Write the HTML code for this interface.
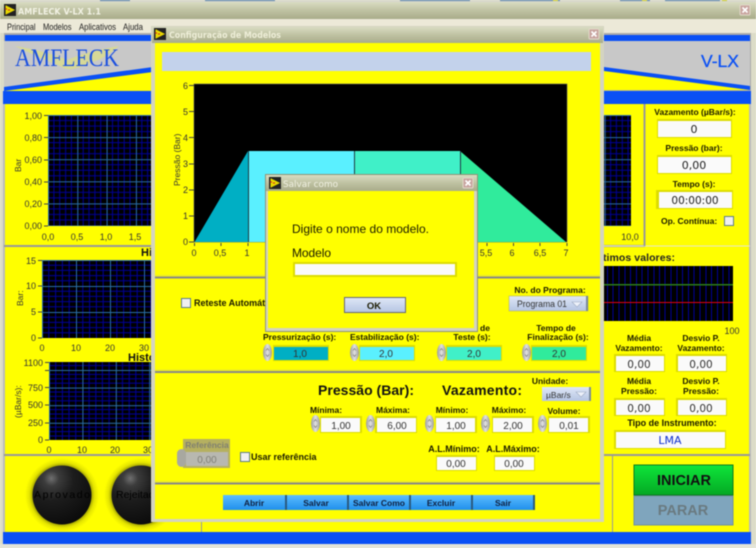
<!DOCTYPE html>
<html><head><meta charset="utf-8"><title>AMFLECK V-LX 1.1</title>
<style>
html,body{margin:0;padding:0;width:756px;height:548px;overflow:hidden;background:#ece9d8}
svg{display:block;filter:blur(.4px)}
text{font-family:"Liberation Sans",sans-serif;fill:#111}
.b{font-weight:bold;font-size:8.5px;fill:#1a1a00}
.c{text-anchor:middle}
.v{font-family:"DejaVu Sans",sans-serif;font-size:9.5px;fill:#333;text-anchor:middle}
.t{font-size:9px;fill:#333;text-anchor:middle}
.r{font-size:9px;fill:#333;text-anchor:end}
.w{font-family:"DejaVu Sans",sans-serif;font-weight:bold;font-size:9px;fill:#f2f2e4}
.m{font-size:9px;fill:#222}
</style></head><body>
<svg width="756" height="548" viewBox="0 0 756 548" xmlns="http://www.w3.org/2000/svg">
<defs>
<linearGradient id="tb" x1="0" y1="0" x2="0" y2="1"><stop offset="0" stop-color="#d9dcc2"/><stop offset=".5" stop-color="#bfc2a2"/><stop offset="1" stop-color="#a9ac8a"/></linearGradient>
<linearGradient id="bb" x1="0" y1="0" x2="0" y2="1"><stop offset="0" stop-color="#5cbcff"/><stop offset="1" stop-color="#1f8fec"/></linearGradient>
<linearGradient id="dd" x1="0" y1="0" x2="0" y2="1"><stop offset="0" stop-color="#dfe7f7"/><stop offset="1" stop-color="#b5c5e2"/></linearGradient>
<linearGradient id="sp" x1="0" y1="0" x2="1" y2="0"><stop offset="0" stop-color="#9a9a9a"/><stop offset=".5" stop-color="#e2e2e2"/><stop offset="1" stop-color="#9a9a9a"/></linearGradient>
<linearGradient id="gr" x1="0" y1="0" x2="0" y2="1"><stop offset="0" stop-color="#0ee63a"/><stop offset="1" stop-color="#04a824"/></linearGradient>
<radialGradient id="ball" cx=".32" cy=".22" r=".85"><stop offset="0" stop-color="#707070"/><stop offset=".15" stop-color="#3c3c3c"/><stop offset=".45" stop-color="#1c1c1c"/><stop offset="1" stop-color="#0a0a0a"/></radialGradient>
<radialGradient id="glow" cx=".5" cy=".5" r=".5"><stop offset=".78" stop-color="#9a9a00"/><stop offset=".88" stop-color="#e4e400"/><stop offset="1" stop-color="#ffff00"/></radialGradient>
<pattern id="g1" x="48" y="115" width="29.3" height="22.1" patternUnits="userSpaceOnUse"><rect width="29.3" height="22.1" fill="#000"/><path d="M5.9 0V22.1M11.7 0V22.1M17.6 0V22.1M23.4 0V22.1M0 5.5H29.3M0 11H29.3M0 16.6H29.3" stroke="#00009a" stroke-width="1"/><path d="M.5 0V22.1M0 .5H29.3" stroke="#2a6ea8" stroke-width="1"/></pattern>
<pattern id="g2" x="42" y="260" width="34" height="26" patternUnits="userSpaceOnUse"><rect width="34" height="26" fill="#000"/><path d="M6.8 0V26M13.6 0V26M20.4 0V26M27.2 0V26M0 5.2H34M0 10.4H34M0 15.6H34M0 20.8H34" stroke="#00009a" stroke-width="1"/><path d="M.5 0V26M0 .5H34" stroke="#2a6ea8" stroke-width="1"/></pattern>
<pattern id="g3" x="49" y="370" width="33.4" height="17.6" patternUnits="userSpaceOnUse"><rect width="33.4" height="17.6" fill="#000"/><path d="M6.7 0V17.6M13.4 0V17.6M20 0V17.6M26.7 0V17.6M0 4.4H33.4M0 8.8H33.4M0 13.2H33.4" stroke="#00009a" stroke-width="1"/><path d="M.5 0V17.6M0 .5H33.4" stroke="#2a6ea8" stroke-width="1"/></pattern>
<g id="icon"><rect width="12" height="12" fill="#222"/><path d="M2 2L10 6L2 10Z" fill="#e8d800" stroke="#e8d800"/><path d="M1 5H3M4 6H6" stroke="#d02020"/></g>
<g id="close"><rect width="10" height="10" rx="1" fill="#c9a5a0" stroke="#e0d8c8"/><path d="M2.5 2.5L7.5 7.5M7.5 2.5L2.5 7.5" stroke="#fff" stroke-width="1.6"/></g>
<g id="spin"><ellipse cx="4.5" cy="8.5" rx="4.5" ry="8.5" fill="url(#sp)"/><path d="M3 6.5L4.5 4.5L6 6.5M3 10.5L4.5 12.5L6 10.5" stroke="#888" fill="none" stroke-width=".8"/></g>
</defs>

<!-- top strip + window frame -->
<rect width="756" height="548" fill="#dcdcc8"/>
<rect width="756" height="2" fill="#d8d8cc"/>
<path d="M100 0H130M205 0H275M400 0H470M500 0H560M620 0H650M665 0H720" stroke="#4a78a8" stroke-width="2"/>
<path d="M553 0H558M642 0H647M722 0H727" stroke="#c8c820" stroke-width="2"/>
<rect y="2" width="756" height="17" fill="url(#tb)"/>
<use href="#icon" x="4" y="4"/>
<text x="18" y="14.5" class="w" textLength="83" lengthAdjust="spacingAndGlyphs">AMFLECK V-LX 1.1</text>
<use href="#close" x="740" y="5"/>
<rect y="19" width="756" height="14" fill="#ece9d8"/>
<text x="7" y="30" class="m" textLength="28.500" lengthAdjust="spacingAndGlyphs">Principal</text><text x="43" y="30" class="m" textLength="28.500" lengthAdjust="spacingAndGlyphs">Modelos</text><text x="79" y="30" class="m" textLength="37" lengthAdjust="spacingAndGlyphs">Aplicativos</text><text x="123" y="30" class="m" textLength="20" lengthAdjust="spacingAndGlyphs">Ajuda</text>

<!-- main header -->
<rect x="4" y="33" width="747" height="70" fill="#aaa"/>
<rect x="5" y="35" width="745" height="6" fill="#0a50f5"/>
<rect x="4" y="41" width="746" height="49" fill="#c8c8c8"/>
<path d="M4 91L153 70L378 60L604 69L750 90Z" fill="#ffff00"/>
<path d="M4 87L153 67L153 72L4 91Z" fill="#0a50f5"/>
<path d="M604 67L750 86L750 90L604 71Z" fill="#0a50f5"/>
<rect x="3" y="91" width="748" height="13" fill="#0a50f5"/>
<path d="M15 46Q50 52 67 60Q85 52 119 46Q100 62 90 62Q70 74 60 66Q40 58 15 46Z" fill="#d6d898"/>
<text x="15" y="66" style="font-family:'Liberation Serif',serif;font-size:25px;fill:#1a4fe0" textLength="104" lengthAdjust="spacingAndGlyphs">AMFLECK</text>
<text x="701" y="67" style="font-size:17.500px;fill:#0a50f5;stroke:#0a50f5;stroke-width:.3">V-LX</text>

<!-- main yellow panels -->
<rect x="4" y="104" width="746" height="429" fill="#ffff00"/>
<rect x="3" y="104" width="2" height="430" fill="#bbb"/>
<rect x="749" y="104" width="2" height="430" fill="#bbb"/>
<path d="M4 246H645" stroke="#999" stroke-width="2"/>
<path d="M604 246H750" stroke="#e8e8d0" stroke-width="1"/>
<path d="M644.5 104V246" stroke="#999" stroke-width="2"/>
<path d="M4 455H150M604 455H750" stroke="#999" stroke-width="2"/>
<path d="M612.5 455V532" stroke="#999"/>
<path d="M201.5 520V532" stroke="#999"/>
<rect x="3" y="532" width="748" height="12" fill="#0a50f5"/>
<rect y="544" width="756" height="4" fill="#e4e4d8"/>

<!-- chart 1 -->
<rect x="48" y="115" width="583" height="111" fill="url(#g1)"/>
<path d="M44 115.5H48M44 137.5H48M44 160H48M44 182H48M44 204H48M44 226H48" stroke="#444"/>
<text x="42" y="119" class="r">1,00</text><text x="42" y="141" class="r">0,80</text><text x="42" y="163" class="r">0,60</text><text x="42" y="185" class="r">0,40</text><text x="42" y="207" class="r">0,20</text><text x="42" y="229" class="r">0,00</text>
<text transform="translate(21,172) rotate(-90)" style="font-size:8.5px;fill:#333">Bar</text>
<text x="48" y="240" class="t">0,0</text><text x="77" y="240" class="t">0,5</text><text x="106" y="240" class="t">1,0</text><text x="135" y="240" class="t">1,5</text><text x="630" y="240" class="t">10,0</text>

<!-- chart 2 -->
<text x="141" y="256" style="font-size:11px;font-weight:bold">Hi</text>
<rect x="42" y="260" width="120" height="78" fill="url(#g2)"/>
<path d="M38 260.5H42M38 286H42M38 312H42M38 338H42" stroke="#444"/>
<text x="36" y="264" class="r">15</text><text x="36" y="289" class="r">10</text><text x="36" y="315" class="r">5</text><text x="36" y="341" class="r">0</text>
<text transform="translate(23,306) rotate(-90)" style="font-size:8.5px;fill:#333">Bar:</text>
<text x="42" y="351" class="t">0</text><text x="76" y="351" class="t">10</text><text x="110" y="351" class="t">20</text><text x="144" y="351" class="t">30</text>
<text x="128" y="361" style="font-size:11px;font-weight:bold">Histó</text>

<!-- chart 3 -->
<rect x="49" y="362" width="110" height="78" fill="url(#g3)"/>
<path d="M45 362.5H49M45 370.5H49M45 387.5H49M45 405H49M45 423H49M45 440H49" stroke="#444"/>
<text x="43" y="366" class="r">1100</text><text x="43" y="391" class="r">750</text><text x="43" y="408" class="r">500</text><text x="43" y="426" class="r">250</text><text x="43" y="443" class="r">0</text>
<text transform="translate(21,418) rotate(-90)" style="font-size:8.5px;fill:#333">(µBar/s):</text>
<text x="49" y="453" class="t">0</text><text x="82" y="453" class="t">10</text><text x="115" y="453" class="t">20</text><text x="148" y="453" class="t">30</text>

<!-- balls -->
<circle cx="62" cy="495" r="37" fill="url(#glow)"/><circle cx="62" cy="495" r="29.5" fill="url(#ball)"/>
<circle cx="141" cy="495" r="37" fill="url(#glow)"/><circle cx="141" cy="495" r="29.5" fill="url(#ball)"/>
<text x="62" y="498" class="c" style="font-size:10.5px;fill:#000" textLength="56">Aprovado</text>
<text x="116" y="498" style="font-size:10.5px;fill:#000">Rejeitado</text>

<!-- right info panel -->
<text x="695" y="115" class="b c">Vazamento (µBar/s):</text>
<rect x="657" y="119" width="75" height="19" fill="#dcdc00"/><rect x="658" y="121" width="73" height="16" fill="#fafafa"/>
<text x="694" y="133" class="c" style="font-family:'DejaVu Sans';font-size:11px;fill:#222">0</text>
<text x="694" y="151" class="b c">Pressão (bar):</text>
<rect x="657" y="155" width="75" height="19" fill="#dcdc00"/><rect x="658" y="157" width="73" height="16" fill="#fafafa"/>
<text x="694" y="169" class="c" style="font-family:'DejaVu Sans';font-size:11px;fill:#222">0,00</text>
<text x="694" y="187" class="b c">Tempo (s):</text>
<rect x="656" y="190" width="77" height="19" fill="#dcdc00"/><rect x="659" y="192" width="73" height="16" fill="#fafafa"/>
<text x="695" y="204" class="c" style="font-family:'DejaVu Sans';font-size:10.5px;fill:#222">00:00:00</text>
<text x="661" y="224" class="b">Op. Contínua:</text>
<rect x="724.5" y="216.5" width="9" height="9" fill="#f0f0f0" stroke="#5c7c8c"/>

<text x="603" y="261" style="font-size:10.5px;font-weight:bold;fill:#222" textLength="72">timos valores:</text>
<rect x="604" y="266" width="129" height="55" fill="#000"/>
<path d="M607.5 266V321M613 266V321M619 266V321M625 266V321M630.500 266V321M636.500 266V321M642 266V321M648 266V321M654 266V321M659.500 266V321M665 266V321M671 266V321M677 266V321M682.500 266V321M688.500 266V321M694 266V321M700 266V321M706 266V321M711.500 266V321M717.500 266V321M723 266V321M729 266V321" stroke="#00009a"/>
<rect x="604" y="284" width="129" height="1.500" fill="#2a7a1a"/>
<rect x="604" y="302" width="129" height="1" fill="#e00010"/>
<text x="732" y="334" class="t">100</text>

<text x="639" y="341" class="b c">Média</text><text x="639" y="351" class="b c">Vazamento:</text>
<text x="701" y="341" class="b c">Desvio P.</text><text x="701" y="351" class="b c">Vazamento:</text>
<rect x="614" y="354" width="51" height="18" fill="#dcdc00"/><rect x="616" y="356" width="48" height="15" fill="#fafafa"/><text x="639" y="368" class="v" style="font-size:10.5px">0,00</text>
<rect x="676" y="354" width="51" height="18" fill="#dcdc00"/><rect x="678" y="356" width="48" height="15" fill="#fafafa"/><text x="701" y="368" class="v" style="font-size:10.5px">0,00</text>
<text x="639" y="384" class="b c">Média</text><text x="639" y="394" class="b c">Pressão:</text>
<text x="701" y="384" class="b c">Desvio P.</text><text x="701" y="394" class="b c">Pressão:</text>
<rect x="614" y="398" width="51" height="18" fill="#dcdc00"/><rect x="616" y="400" width="48" height="15" fill="#fafafa"/><text x="639" y="412" class="v" style="font-size:10.5px">0,00</text>
<rect x="676" y="398" width="51" height="18" fill="#dcdc00"/><rect x="678" y="400" width="48" height="15" fill="#fafafa"/><text x="701" y="412" class="v" style="font-size:10.5px">0,00</text>
<text x="672" y="426" class="b c" style="font-size:9px">Tipo de Instrumento:</text>
<rect x="614" y="430" width="112" height="19" fill="#dcdc00"/><rect x="616" y="432" width="109" height="16" fill="#fafafa"/>
<text x="670" y="444" class="c" style="font-family:'DejaVu Sans';font-size:11px;fill:#1030d0">LMA</text>

<!-- start/stop -->
<rect x="634" y="465" width="99" height="30" fill="url(#gr)" stroke="#0a7a20"/>
<text x="684" y="485" class="c" style="font-size:14.5px;font-weight:bold;fill:#111">INICIAR</text>
<rect x="634" y="496" width="99" height="29" fill="#7fa5bd" stroke="#6f8fa0"/>
<text x="683" y="515" class="c" style="font-size:14.5px;font-weight:bold;fill:#6a7a80">PARAR</text>

<!-- config dialog -->
<rect x="151" y="26" width="453" height="496" fill="#d4d4c0"/>
<rect x="152" y="27" width="451" height="16" fill="url(#tb)"/>
<use href="#icon" x="154" y="28"/>
<text x="169" y="38" class="w" style="fill:#eeeed8" textLength="112" lengthAdjust="spacingAndGlyphs">Configuração de Modelos</text>
<use href="#close" x="589" y="29"/>
<rect x="155" y="43" width="445" height="476" fill="#ffff00"/>
<rect x="162" y="52" width="429" height="19" fill="#c3d2eb"/>
<path d="M155 277.500H600M155 372H600M155 483.500H600" stroke="#888" stroke-width="2"/>
<path d="M155 275.500H600M155 370H600M155 481.500H600" stroke="#cfcf60" stroke-width=".6"/>

<rect x="194" y="84" width="373" height="158" fill="#000" stroke="#555" stroke-width=".6"/>
<path d="M194.500 242L248 151V242Z" fill="#00afc4"/>
<rect x="248" y="151" width="106" height="91" fill="#5af0ff"/>
<rect x="354" y="151" width="106" height="91" fill="#40f0c8"/>
<path d="M460 151L566 242H460Z" fill="#30eb9c"/>
<path d="M248.500 151V242M354.500 151V242M460.500 151V242" stroke="#1e3c44"/>
<path d="M189 85.500H194M189 111.500H194M189 137.500H194M189 164H194M189 190H194M189 216H194M189 242H194" stroke="#444"/>
<text x="188" y="89" class="r">6</text><text x="188" y="115" class="r">5</text><text x="188" y="141" class="r">4</text><text x="188" y="167" class="r">3</text><text x="188" y="193" class="r">2</text><text x="188" y="219" class="r">1</text><text x="188" y="245" class="r">0</text>
<text transform="translate(180,186) rotate(-90)" style="font-size:8.5px;fill:#333">Pressão (Bar)</text>
<path d="M194.500 243V246M221 243V246M248 243V246M487 243V246M513.500 243V246M540 243V246M567 243V246" stroke="#444"/>
<text x="194" y="256" class="t">0</text><text x="220" y="256" class="t">0,5</text><text x="247" y="256" class="t">1</text><text x="486" y="256" class="t">5,5</text><text x="512" y="256" class="t">6</text><text x="540" y="256" class="t">6,5</text><text x="566" y="256" class="t">7</text>

<rect x="181.500" y="298.500" width="9" height="9" fill="#f0f0f0" stroke="#5c7c8c"/>
<text x="194" y="306" class="b" style="font-size:9px">Reteste Automático</text>

<text x="550" y="293" class="b c">No. do Programa:</text>
<rect x="509" y="296" width="79" height="15" fill="url(#dd)" stroke="#b8b860" stroke-width=".6"/>
<rect x="586" y="296" width="2" height="15" fill="#7a8a9a"/>
<text x="517" y="307" style="font-size:9px;fill:#333" textLength="50" lengthAdjust="spacingAndGlyphs">Programa 01</text>
<path d="M572 302H582L577 307Z" fill="#eef2fa" stroke="#9aa8c0" stroke-width=".6"/>

<text x="263" y="340" class="b">Pressurização (s):</text>
<text x="350" y="340" class="b">Estabilização (s):</text>
<text x="485" y="331" class="b c">de</text><text x="472" y="340" class="b c">Teste (s):</text>
<text x="556" y="331" class="b c">Tempo de</text><text x="558" y="340" class="b c">Finalização (s):</text>
<use href="#spin" x="263" y="344"/><use href="#spin" x="350" y="344"/><use href="#spin" x="437" y="344"/><use href="#spin" x="522" y="344"/>
<rect x="273" y="345" width="56" height="16" fill="#dcdc00"/><rect x="274" y="347" width="54" height="13" fill="#00afc4"/><text x="300" y="357" class="t" style="font-size:10px">1,0</text>
<rect x="359" y="345" width="56" height="16" fill="#dcdc00"/><rect x="360" y="347" width="54" height="13" fill="#5af0ff"/><text x="386" y="357" class="t" style="font-size:10px">2,0</text>
<rect x="446" y="345" width="56" height="16" fill="#dcdc00"/><rect x="447" y="347" width="54" height="13" fill="#40f0c8"/><text x="474" y="357" class="t" style="font-size:10px">2,0</text>
<rect x="531" y="345" width="56" height="16" fill="#dcdc00"/><rect x="532" y="347" width="54" height="13" fill="#30eb9c"/><text x="559" y="357" class="t" style="font-size:10px">2,0</text>

<text x="318" y="395" style="font-size:14px;font-weight:bold;fill:#111" textLength="96">Pressão (Bar):</text>
<text x="442" y="395" style="font-size:14px;font-weight:bold;fill:#111" textLength="80">Vazamento:</text>
<text x="550" y="384" class="b c">Unidade:</text>
<rect x="542" y="387" width="49" height="14" fill="url(#dd)"/><rect x="589" y="387" width="2" height="14" fill="#7a8a9a"/>
<text x="546" y="398" style="font-size:8.5px;fill:#333">µBar/s</text>
<path d="M576 392H586L581 397Z" fill="#eef2fa" stroke="#9aa8c0" stroke-width=".6"/>

<text x="326" y="413" class="b c">Mínima:</text><text x="393" y="413" class="b c">Máxima:</text><text x="452" y="413" class="b c">Mínimo:</text><text x="509" y="413" class="b c">Máximo:</text><text x="564" y="414" class="b c">Volume:</text>
<use href="#spin" x="311" y="415"/><use href="#spin" x="366" y="415"/><use href="#spin" x="425" y="415"/><use href="#spin" x="481" y="415"/><use href="#spin" x="538" y="415"/>
<rect x="320" y="416" width="42" height="17" fill="#dcdc00"/><rect x="321" y="418" width="39" height="14" fill="#fafafa"/><text x="341" y="429" class="t" style="font-size:10px">1,00</text>
<rect x="375" y="416" width="42" height="17" fill="#dcdc00"/><rect x="377" y="418" width="39" height="14" fill="#fafafa"/><text x="397" y="429" class="t" style="font-size:10px">6,00</text>
<rect x="435" y="416" width="42" height="17" fill="#dcdc00"/><rect x="436" y="418" width="39" height="14" fill="#fafafa"/><text x="456" y="429" class="t" style="font-size:10px">1,00</text>
<rect x="492" y="416" width="42" height="17" fill="#dcdc00"/><rect x="493" y="418" width="39" height="14" fill="#fafafa"/><text x="513" y="429" class="t" style="font-size:10px">2,00</text>
<rect x="548" y="416" width="42" height="17" fill="#dcdc00"/><rect x="549" y="418" width="39" height="14" fill="#fafafa"/><text x="569" y="429" class="t" style="font-size:10px">0,01</text>

<text x="454" y="452" class="b c" style="font-size:9px">A.L.Mínimo:</text><text x="513" y="452" class="b c" style="font-size:9px">A.L.Máximo:</text>
<rect x="436" y="455" width="41" height="16" fill="#dcdc00"/><rect x="437" y="457" width="39" height="13" fill="#fafafa"/><text x="456" y="467" class="t" style="font-size:10px">0,00</text>
<rect x="494" y="455" width="41" height="16" fill="#dcdc00"/><rect x="495" y="457" width="39" height="13" fill="#fafafa"/><text x="514" y="467" class="t" style="font-size:10px">0,00</text>

<rect x="183" y="439" width="47" height="29" fill="#b5b060"/>
<rect x="186" y="452" width="42" height="14" fill="#b8b8b0"/>
<rect x="177" y="449" width="9" height="18" rx="4.500" fill="#a8a8a0"/>
<text x="207" y="448" class="b c" style="fill:#808070">Referência</text>
<text x="207" y="463" class="t" style="fill:#808078;font-size:10px">0,00</text>
<rect x="240.500" y="452.500" width="9" height="9" fill="#f0f0f0" stroke="#5c7c8c"/>
<text x="251" y="460" class="b" style="font-size:9px">Usar referência</text>

<rect x="223" y="495" width="62" height="15" fill="url(#bb)"/><rect x="285" y="495" width="2" height="15" fill="#2a5a80"/>
<rect x="287" y="495" width="60" height="15" fill="url(#bb)"/><rect x="347" y="495" width="2" height="15" fill="#2a5a80"/>
<rect x="349" y="495" width="60" height="15" fill="url(#bb)"/><rect x="409" y="495" width="2" height="15" fill="#2a5a80"/>
<rect x="411" y="495" width="60" height="15" fill="url(#bb)"/><rect x="471" y="495" width="2" height="15" fill="#2a5a80"/>
<rect x="473" y="495" width="60" height="15" fill="url(#bb)"/><rect x="533" y="495" width="2" height="15" fill="#2a5a80"/>
<text x="254" y="506" class="b c" style="fill:#102040">Abrir</text><text x="316" y="506" class="b c" style="fill:#102040">Salvar</text><text x="379" y="506" class="b c" style="fill:#102040">Salvar Como</text><text x="441" y="506" class="b c" style="fill:#102040">Excluir</text><text x="503" y="506" class="b c" style="fill:#102040">Sair</text>

<!-- save dialog -->
<rect x="265" y="174" width="213" height="158" fill="#8f9478"/>
<rect x="266" y="175" width="211" height="156" fill="#d4d4c0"/>
<rect x="266" y="175" width="211" height="16" fill="url(#tb)"/>
<use href="#icon" x="269" y="177"/>
<text x="283" y="187" class="w" style="font-weight:normal" textLength="55" lengthAdjust="spacingAndGlyphs">Salvar como</text>
<use href="#close" x="463" y="178"/>
<rect x="268" y="191" width="206" height="137" fill="#ffff00"/>
<text x="292" y="233" style="font-size:12px;fill:#1a1a00" textLength="137">Digite o nome do modelo.</text>
<text x="292" y="257" style="font-size:12px;fill:#1a1a00" textLength="39">Modelo</text>
<rect x="293" y="262" width="164" height="15" fill="#dcdc00"/>
<rect x="295" y="264" width="160" height="11" fill="#fafafa"/>
<rect x="344.500" y="297.500" width="61" height="15" fill="url(#dd)" stroke="#667"/>
<text x="374" y="309" class="b c" style="font-size:9.500px">OK</text>
</svg>
</body></html>
